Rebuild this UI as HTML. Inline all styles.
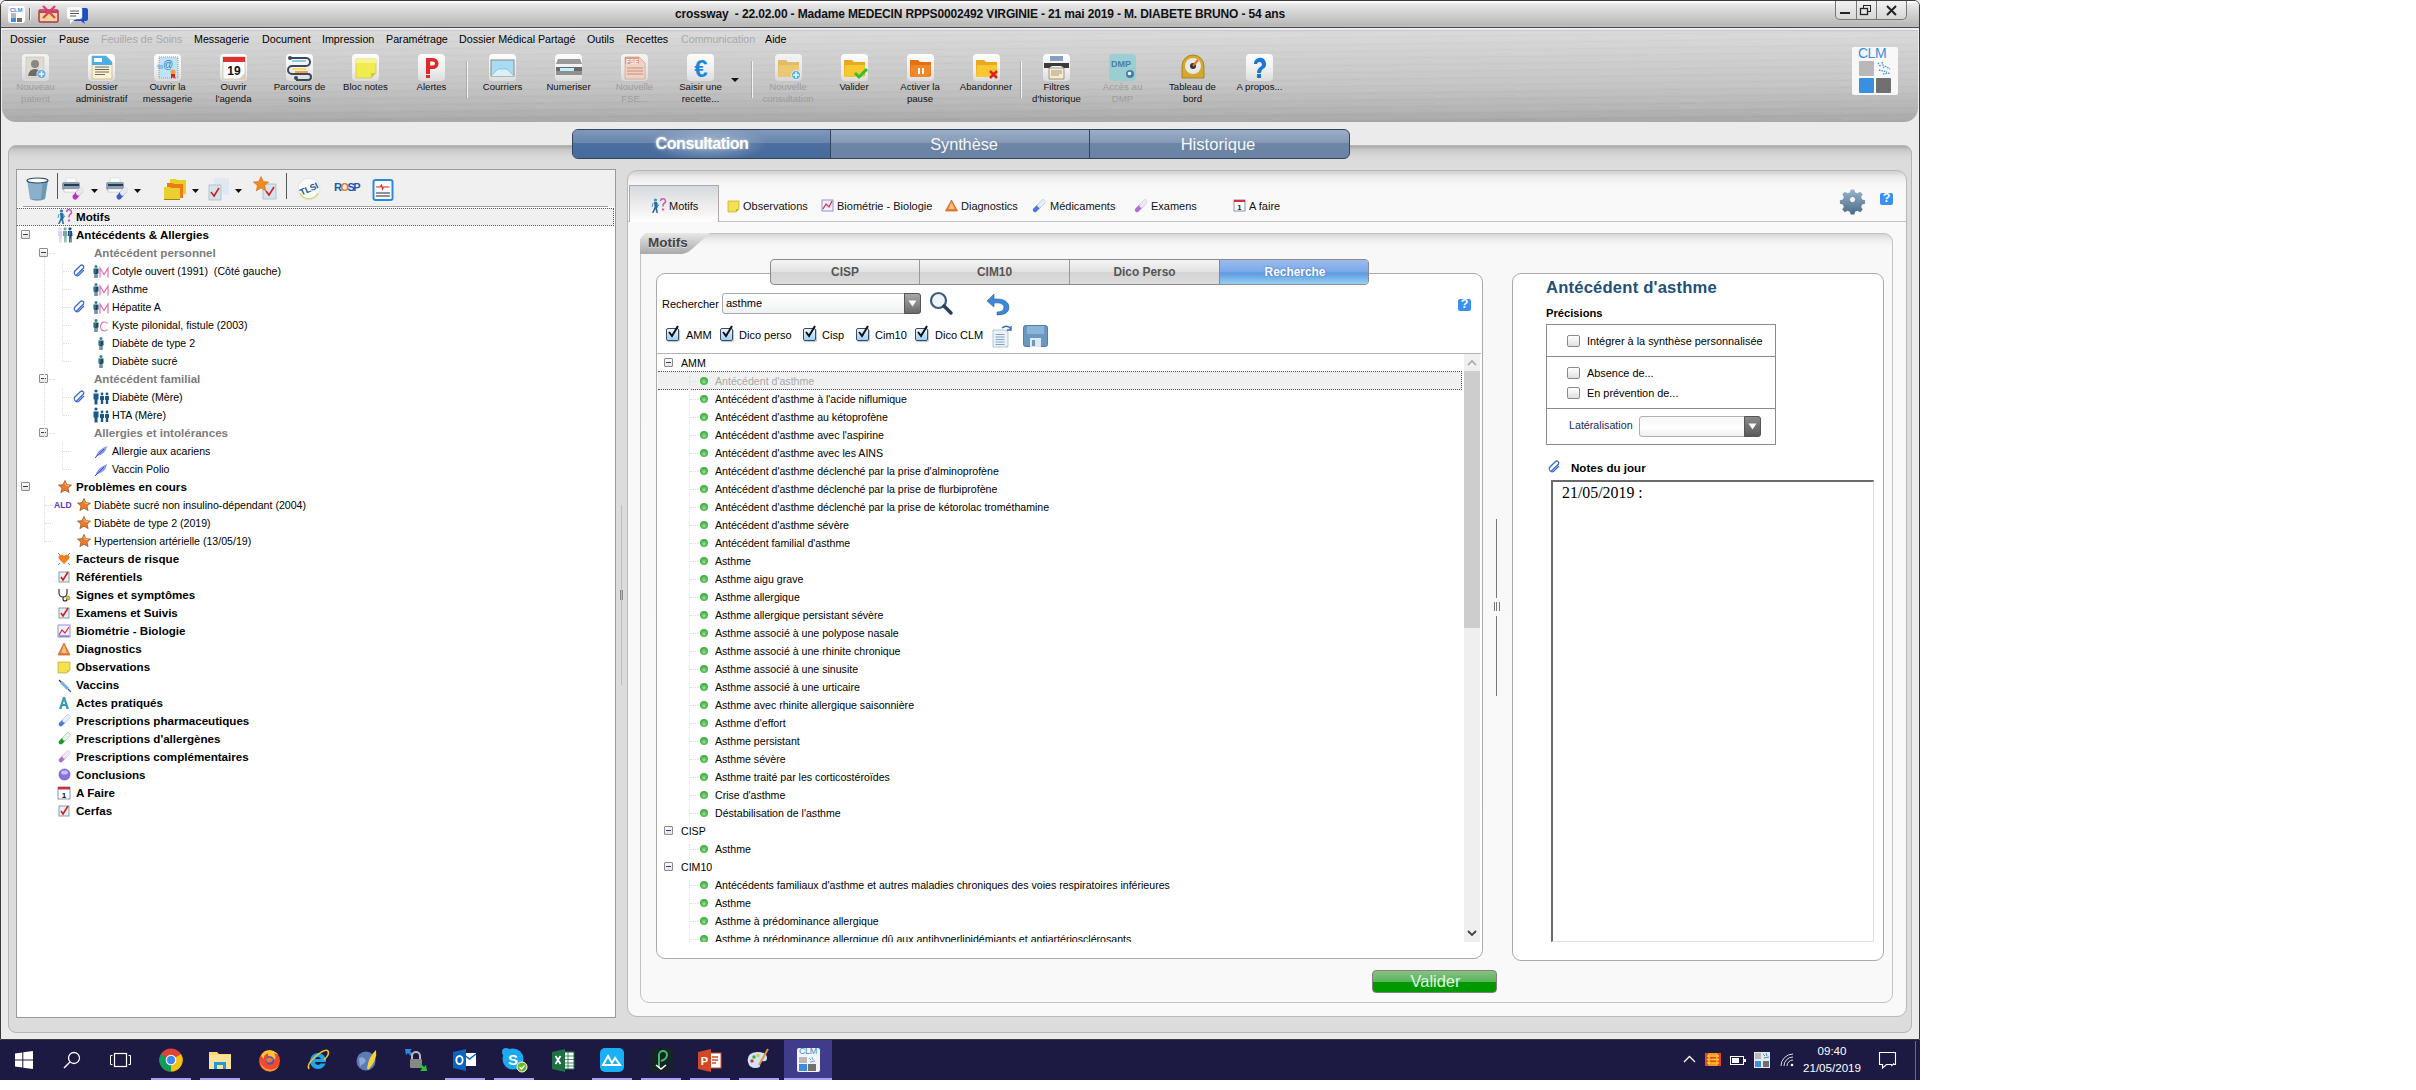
<!DOCTYPE html>
<html><head><meta charset="utf-8">
<style>
*{box-sizing:border-box;margin:0;padding:0}
html,body{width:2416px;height:1090px;background:#fff;overflow:hidden;font-family:"Liberation Sans",sans-serif;}
.a{position:absolute}
svg{position:absolute;overflow:visible}
#scr{position:absolute;left:0;top:0;width:1920px;height:1080px;background:#ebebeb;overflow:hidden}
#win{position:absolute;left:0;top:0;width:1920px;height:1040px;border:1px solid #3a3a3a;border-top-left-radius:6px;border-top-right-radius:6px;background:#ebebeb}
#title{position:absolute;left:0px;top:0px;width:1918px;height:27px;background:linear-gradient(#ffffff,#ffffff 1px,#e9e9e9 3px,#d6d6d6 40%,#c6c6c6 70%,#b8b8b8 92%,#bebebe);border-bottom:1px solid #4a4a4a;border-top-left-radius:5px;border-top-right-radius:5px}
#ttext{position:absolute;left:674px;top:6px;font-size:12px;font-weight:bold;color:#111;letter-spacing:-0.15px;white-space:pre}
#metal{position:absolute;left:1px;top:28px;width:1916px;height:93px;border-top:1px solid #f0f0f2;box-shadow:inset 0 1px 0 #c4c4d6;border-bottom-left-radius:14px;border-bottom-right-radius:14px;
 background:
 repeating-linear-gradient(179.3deg,rgba(255,255,255,.06) 0px,rgba(255,255,255,0) 2px,rgba(0,0,0,.02) 3px,rgba(255,255,255,0) 4px,rgba(255,255,255,.04) 6px,rgba(255,255,255,0) 7px),
 linear-gradient(#dadada,#d0d0d0 25%,#c4c4c4 60%,#b4b4b4 85%,#a6a6a6)}
.menu{position:absolute;top:32px;font-size:10.7px;line-height:14px;color:#000;white-space:pre}
.menu.dis{color:#a9a9a9}
.tb{position:absolute;top:81px;width:90px;margin-left:-45px;text-align:center;font-size:9.6px;line-height:11.6px;color:#111;white-space:pre}
.tb.dis{color:#9c9c9c}
.ib{position:absolute;top:54px;width:27px;height:27px;margin-left:-13.5px;border-radius:4px;background:linear-gradient(#fdfdfd,#eeeeee 60%,#dcdcdc)}
.ib.dis{opacity:.8}
.sep{position:absolute;top:61px;width:1px;height:37px;background:#f4f4f4;box-shadow:-1px 0 0 rgba(120,120,120,.35)}
.tb1{position:absolute;font-size:11.6px;font-weight:bold;line-height:18px;color:#000;white-space:pre}
.tb2{position:absolute;font-size:11.6px;font-weight:bold;line-height:18px;color:#7c7c7c;white-space:pre}
.ti{position:absolute;font-size:10.6px;line-height:19px;color:#000;white-space:pre}
.mb{position:absolute;width:9px;height:9px;border:1px solid #8c8c8c;border-radius:1px;background:linear-gradient(#fff,#e4e4e4)}
.tl{position:absolute;top:198px;font-size:11px;line-height:16px;color:#111;white-space:pre}
.lb{position:absolute;font-size:11px;line-height:16px;color:#000;white-space:pre}
.li{position:absolute;font-size:10.6px;line-height:18px;color:#000;white-space:pre}
.bul{position:absolute;width:8px;height:8px;border-radius:50%;background:radial-gradient(circle at 50% 60%,#a8e0a8 0,#5ac05a 35%,#2aa02a 100%)}
.itab{position:absolute;top:0;height:24px;line-height:24px;text-align:center;font-size:11.9px;font-weight:bold;color:#555}
.qh{position:absolute;width:13px;height:12px;border-radius:2px;background:#3a90ef}
.qh:after{content:"?";position:absolute;left:0;top:-2px;width:13px;text-align:center;font-size:12.5px;font-weight:bold;color:#fff}
.cbx{position:absolute;width:13px;height:13px;border:1px solid #3a4a6a;border-radius:2px;background:linear-gradient(#f0f8ff,#9ad0f8);box-shadow:1px 1px 1px rgba(0,0,0,.25)}
.cbe{position:absolute;width:13px;height:12px;border:1px solid #8a8a8a;border-radius:2px;background:linear-gradient(#fff,#e0e0e0)}
.mb:after{content:"";position:absolute;left:1px;top:3px;width:5px;height:1px;background:#2a3a8a}
</style></head><body>
<div id="scr">
<div id="win">
 <div id="title">
  <div id="ttext">crossway  - 22.02.00 - Madame MEDECIN RPPS0002492 VIRGINIE - 21 mai 2019 - M. DIABETE BRUNO - 54 ans</div>
  <!-- title icons -->
  <div class="a" style="left:7px;top:5px;width:17px;height:17px;background:#fff;border-radius:3px"></div>
  <div class="a" style="left:9px;top:6px;font-size:6px;font-weight:bold;color:#3a8fe0;letter-spacing:-0.3px">CLM</div>
  <div class="a" style="left:10px;top:12px;width:5px;height:5px;background:#b8b8b8"></div>
  <div class="a" style="left:10px;top:17px;width:5px;height:4px;background:#3a8fe0"></div>
  <div class="a" style="left:16px;top:17px;width:5px;height:4px;background:#707070"></div>
  <div class="a" style="left:28px;top:7px;width:1px;height:12px;background:#666;box-shadow:1px 0 0 #eee"></div>
  <svg style="left:37px;top:4px" width="21" height="18" viewBox="0 0 21 18">
   <rect x="1" y="5" width="19" height="12" rx="1.5" fill="#f0d890" stroke="#b03060" stroke-width="1.5"/>
   <rect x="1" y="6" width="19" height="2" fill="#c04070"/>
   <path d="M5 1 L17 13 M17 1 L5 13" stroke="#e04060" stroke-width="2.2"/>
  </svg>
  <svg style="left:66px;top:5px" width="22" height="18" viewBox="0 0 22 18">
   <path d="M14 2 h5 a2 2 0 0 1 2 2 v9 a2 2 0 0 1 -2 2 h-2 l1 3 l-4 -3 h-8 l9 -5z" fill="#2050c0"/>
   <rect x="0" y="1" width="15" height="12" rx="2" fill="#fff" stroke="#ddd" stroke-width=".5"/>
   <path d="M3 14 l0 4 l4 -4z" fill="#fff"/>
   <path d="M3 5 h9 M3 7.5 h9 M3 10 h6" stroke="#555" stroke-width="1"/>
  </svg>
  <!-- window buttons -->
  <div class="a" style="left:1834px;top:0px;width:72px;height:19px;border:1px solid #777;border-top:none;border-bottom-left-radius:5px;border-bottom-right-radius:5px;background:linear-gradient(#f2f2f2,#d6d6d6)"></div>
  <div class="a" style="left:1855px;top:0px;width:1px;height:19px;background:#777"></div>
  <div class="a" style="left:1875px;top:0px;width:1px;height:19px;background:#777"></div>
  <div class="a" style="left:1839px;top:11px;width:10px;height:2px;background:#222"></div>
  <svg style="left:1859px;top:4px" width="12" height="11" viewBox="0 0 12 11"><rect x="3.5" y="0.5" width="7" height="6" fill="none" stroke="#222"/><rect x="0.5" y="3.5" width="7" height="6" fill="#e6e6e6" stroke="#222" stroke-width="1.3"/></svg>
  <svg style="left:1885px;top:4px" width="12" height="11" viewBox="0 0 12 11"><path d="M1 1 L10 10 M10 1 L1 10" stroke="#222" stroke-width="2"/></svg>
 </div>
 <div id="metal"></div>
</div>
<!-- menu -->
  <div class="menu" style="left:10px">Dossier</div>
  <div class="menu" style="left:59px">Pause</div>
  <div class="menu dis" style="left:101px">Feuilles de Soins</div>
  <div class="menu" style="left:194px">Messagerie</div>
  <div class="menu" style="left:262px">Document</div>
  <div class="menu" style="left:322px">Impression</div>
  <div class="menu" style="left:386px">Paramétrage</div>
  <div class="menu" style="left:459px">Dossier Médical Partagé</div>
  <div class="menu" style="left:587px">Outils</div>
  <div class="menu" style="left:626px">Recettes</div>
  <div class="menu dis" style="left:681px">Communication</div>
  <div class="menu" style="left:765px">Aide</div>
<!-- toolbar -->
<div class="ib dis" style="left:35.5px"><svg style="left:3px;top:2px" width="22" height="24" viewBox="0 0 22 24"><rect x="1" y="1" width="18" height="21" fill="#e6dfcf" stroke="#bbb" stroke-width=".6"/><circle cx="10" cy="8" r="4" fill="#777"/><path d="M3 20 q1-7 7-7 q6 0 7 7z" fill="#555"/><circle cx="16.5" cy="18" r="4.6" fill="#4aa8e8" stroke="#fff" stroke-width=".8"/><path d="M16.5 15.2v5.6M13.7 18h5.6" stroke="#fff" stroke-width="1.6"/></svg></div>
<div class="tb dis" style="left:35.5px">Nouveau
patient</div>
<div class="ib" style="left:101.5px"><svg style="left:3px;top:1px" width="22" height="25" viewBox="0 0 22 25"><path d="M1 1h14l6 6v17h-20z" fill="#fbf1cf" stroke="#c9b98a" stroke-width=".8"/><path d="M1 1h14l6 6v3h-20z" fill="#4aaee8"/><rect x="3" y="3" width="8" height="4" fill="#fff"/><path d="M4 12h14M4 14.5h14M4 17h14M4 19.5h10" stroke="#6a6a6a" stroke-width="1"/></svg></div>
<div class="tb" style="left:101.5px">Dossier
administratif</div>
<div class="ib" style="left:167.5px"><svg style="left:3px;top:2px" width="22" height="24" viewBox="0 0 22 24"><rect x="2" y="1" width="19" height="21" fill="#bfe2f5" stroke="#999" stroke-dasharray="1 1"/><text x="11" y="12" font-size="10" font-family="Liberation Sans" fill="#2a7abf" text-anchor="middle">@</text><path d="M0 10h6M1 12h5" stroke="#5aa0d0" stroke-width="1"/><circle cx="16" cy="16" r="2.5" fill="#f0a030"/><path d="M14 18l0 5 2-2 2 2 0-5z" fill="#e02020"/></svg></div>
<div class="tb" style="left:167.5px">Ouvrir la
messagerie</div>
<div class="ib" style="left:233.5px"><svg style="left:2px;top:1px" width="24" height="25" viewBox="0 0 24 25"><rect x="1" y="2" width="22" height="22" fill="#fff" stroke="#c9c0a0" stroke-width=".8"/><rect x="1" y="2" width="22" height="5" fill="#e03030"/><path d="M17 24 l6 -6 v6z" fill="#d8ceb0"/><text x="12" y="20" font-size="12" font-weight="bold" font-family="Liberation Sans" fill="#111" text-anchor="middle">19</text></svg></div>
<div class="tb" style="left:233.5px">Ouvrir
l'agenda</div>
<div class="ib" style="left:299.5px"><svg style="left:1px;top:1px" width="25" height="25" viewBox="0 0 25 25"><path d="M3 3h16a4 4 0 0 1 0 8h-14a4 4 0 0 0 0 8h16a3 3 0 0 1 0 6h-12" fill="none" stroke="#3a4a5a" stroke-width="2"/><circle cx="3" cy="3" r="2" fill="#3a4a5a"/><circle cx="9" cy="23" r="2" fill="#3a4a5a"/><path d="M5 6h14M5 14h14M8 17h13" stroke="#8cc8f0" stroke-width="2"/><path d="M5 14h14" stroke="#f0e070" stroke-width="2"/><path d="M8 17h13" stroke="#f0a040" stroke-width="2"/></svg></div>
<div class="tb" style="left:299.5px">Parcours de
soins</div>
<div class="ib" style="left:365.5px"><svg style="left:3px;top:4px" width="22" height="20" viewBox="0 0 22 20"><path d="M1 1h20v14l-5 5h-15z" fill="#f0ec50" stroke="#c8c040" stroke-width=".6"/><path d="M16 20l5-5h-5z" fill="#c8d030"/><rect x="1" y="1" width="20" height="4" fill="#f8f490"/></svg></div>
<div class="tb" style="left:365.5px">Bloc notes</div>
<div class="ib" style="left:431.5px"><svg style="left:6px;top:3px" width="16" height="22" viewBox="0 0 16 22"><path d="M2 1h7a5.5 5.5 0 0 1 0 11h-3v5h-4z M6 4.5v4h3a2 2 0 0 0 0-4z" fill="#e02a2a" fill-rule="evenodd"/><rect x="2" y="18" width="4" height="3" fill="#e02a2a"/></svg></div>
<div class="tb" style="left:431.5px">Alertes</div>
<div class="sep" style="left:467px"></div>
<div class="ib" style="left:502.5px"><svg style="left:1px;top:4px" width="25" height="20" viewBox="0 0 25 20"><rect x="1" y="2" width="23" height="16" fill="#a8dcf5" stroke="#8a8a7a" stroke-width="1"/><path d="M1 18 l7 -7 h9 l7 7" fill="#d8f0fb" stroke="#7aa8c0" stroke-width=".6"/></svg></div>
<div class="tb" style="left:502.5px">Courriers</div>
<div class="ib" style="left:568.5px"><svg style="left:1px;top:3px" width="26" height="22" viewBox="0 0 26 22"><path d="M2 2h22l2 5h-26z" fill="#9a9a9a"/><rect x="0" y="10" width="26" height="8" fill="#6a6a6a"/><rect x="4" y="11" width="14" height="3" fill="#bff0ff"/><rect x="0" y="14" width="26" height="4" fill="#909090"/></svg></div>
<div class="tb" style="left:568.5px">Numeriser</div>
<div class="ib dis" style="left:634.5px"><svg style="left:3px;top:2px" width="22" height="24" viewBox="0 0 22 24"><path d="M1 1h14l6 6v16h-20z" fill="#f6d6c6" stroke="#d8a080" stroke-width=".8"/><rect x="1" y="1" width="14" height="7" fill="#e09070"/><text x="2" y="7.5" font-size="6.5" font-weight="bold" font-family="Liberation Sans" fill="#fff">FSE</text><path d="M3 12h16M3 15h16M3 18h16" stroke="#e09a80" stroke-width="1.4"/></svg></div>
<div class="tb dis" style="left:634.5px">Nouvelle
FSE...</div>
<div class="ib" style="left:700.5px"><svg style="left:2px;top:3px" width="24" height="22" viewBox="0 0 24 22"><text x="12" y="20" font-size="24" font-weight="bold" font-family="Liberation Sans" fill="#1a88d8" text-anchor="middle">€</text></svg></div>
<div class="tb" style="left:700.5px">Saisir une
recette...</div>
<svg style="left:731px;top:78px" width="8" height="5" viewBox="0 0 8 5"><path d="M0 0h8l-4 4z" fill="#111"/></svg>
<div class="sep" style="left:752px"></div>
<div class="ib dis" style="left:788px"><svg style="left:2px;top:3px" width="24" height="23" viewBox="0 0 24 23"><path d="M1 3h8l2 2h11v14h-21z" fill="#e8b850"/><path d="M2 8h20l-1 12h-20z" fill="#f5c860"/><circle cx="19" cy="18" r="4.5" fill="#30b0e8" stroke="#fff" stroke-width=".8"/><path d="M19 15v6M16 18h6" stroke="#fff" stroke-width="1.6"/></svg></div>
<div class="tb dis" style="left:788px">Nouvelle
consultation</div>
<div class="ib" style="left:854px"><svg style="left:2px;top:3px" width="24" height="23" viewBox="0 0 24 23"><path d="M1 3h8l2 2h11v14h-21z" fill="#e8a820"/><path d="M2 8h20l-1 12h-20z" fill="#f8c830"/><path d="M12 16 l4 4 l8 -8" fill="none" stroke="#30c030" stroke-width="3"/></svg></div>
<div class="tb" style="left:854px">Valider</div>
<div class="ib" style="left:920px"><svg style="left:2px;top:3px" width="24" height="23" viewBox="0 0 24 23"><path d="M1 3h8l2 2h11v14h-21z" fill="#e07010"/><path d="M2 8h20l-1 12h-20z" fill="#f08828"/><path d="M10 11v6M14 11v6" stroke="#fff" stroke-width="2"/></svg></div>
<div class="tb" style="left:920px">Activer la
pause</div>
<div class="ib" style="left:986px"><svg style="left:2px;top:3px" width="24" height="23" viewBox="0 0 24 23"><path d="M1 3h8l2 2h11v14h-21z" fill="#e8a820"/><path d="M2 8h20l-1 12h-20z" fill="#f8c830"/><path d="M15 14 l7 7 M22 14 l-7 7" stroke="#e02020" stroke-width="2.5"/></svg></div>
<div class="tb" style="left:986px">Abandonner</div>
<div class="sep" style="left:1021px"></div>
<div class="ib" style="left:1056.5px"><svg style="left:1px;top:2px" width="25" height="24" viewBox="0 0 25 24"><rect x="6" y="0" width="13" height="5" fill="#8aa0c0"/><path d="M0 7h25v5h-5l-3-2h-9l-3 2h-5z" fill="#3a3a3a"/><path d="M5 12h15v11h-15z" fill="#f8ecc0" stroke="#666" stroke-width=".6"/><path d="M7 15h11M7 17h11M7 19h8" stroke="#889" stroke-width=".8"/></svg></div>
<div class="tb" style="left:1056.5px">Filtres
d'historique</div>
<div class="ib dis" style="left:1122.5px;background:#8fd0d4"><svg style="left:1px;top:3px" width="25" height="22" viewBox="0 0 25 22"><text x="1" y="10" font-size="9" font-weight="bold" font-family="Liberation Sans" fill="#2a6aa0">DMP</text><circle cx="20" cy="17" r="4" fill="#2a6aa0"/><circle cx="19.5" cy="16.5" r="1.8" fill="#fff"/></svg></div>
<div class="tb dis" style="left:1122.5px">Accès au
DMP</div>
<svg style="left:1180px;top:53px" width="26" height="27" viewBox="0 0 26 27"><path d="M2 25 v-12 a11 11 0 0 1 22 0 v12z" fill="#d4a830" stroke="#a07a10" stroke-width=".8"/><circle cx="13" cy="13" r="8" fill="#e8e8e8"/><circle cx="13" cy="13" r="3" fill="#333"/><path d="M13 13 l5 -6" stroke="#f07010" stroke-width="2"/></svg>
<div class="tb" style="left:1192.5px">Tableau de
bord</div>
<div class="ib" style="left:1259.5px"><svg style="left:6px;top:3px" width="16" height="22" viewBox="0 0 16 22"><path d="M2 7 a6 6 0 1 1 9 5 q-2 1 -2 4 h-4 q0-4 3-6 a2.5 2.5 0 1 0 -3-3z" fill="#1a78d0"/><rect x="5" y="17" width="4" height="4" fill="#1a78d0"/></svg></div>
<div class="tb" style="left:1259.5px">A propos...</div>
<!-- CLM logo -->
<div class="a" style="left:1852px;top:47px;width:46px;height:48px;background:#f8f8f8;border-radius:2px"></div>
<div class="a" style="left:1858px;top:45px;font-size:14px;color:#3a8fe0;letter-spacing:-0.5px">CLM</div>
<div class="a" style="left:1859px;top:61px;width:15px;height:15px;background:#b8b8b8;border-radius:1px"></div>
<div class="a" style="left:1859px;top:78px;width:15px;height:15px;background:#3a8fe0;border-radius:1px"></div>
<div class="a" style="left:1876px;top:78px;width:15px;height:15px;background:#707070;border-radius:1px"></div>
<svg style="left:1876px;top:61px" width="16" height="15" viewBox="0 0 16 15"><path d="M2 2 l3 4 M6 1 l2 6 M3 9 l8 2 M9 5 l5 3 M7 13 l7 -1" stroke="#3a8fe0" stroke-width="1.3" stroke-dasharray="1.5 1"/></svg>
<!-- big panel -->
<div class="a" style="left:8px;top:145px;width:1904px;height:888px;border:1px solid #b4b4b4;border-radius:8px;background:linear-gradient(#a9a9a9,#c8c8c8 4px,#d8d8d8 10px,#dcdcdc 16px)"></div>
<!-- main tabs -->
<div class="a" style="left:572px;top:129px;width:778px;height:30px;border:1px solid #34445c;border-radius:6px;overflow:hidden;background:linear-gradient(#9caec6,#8599b6 45%,#6e86a6 46%,#6a82a3)">
 <div class="a" style="left:0;top:0;width:258px;height:28px;background:linear-gradient(#7f97b9,#6b87ae 45%,#4b6fa0 46%,#466a9b);border-right:1px solid #34445c"></div>
 <div class="a" style="left:70px;top:-6px;width:130px;height:40px;background:radial-gradient(ellipse at center,rgba(200,215,230,.55),rgba(200,215,230,0) 65%)"></div>
 <div class="a" style="left:516px;top:0;width:1px;height:28px;background:#34445c"></div>
 <div class="a" style="left:0;top:5px;width:258px;text-align:center;font-size:16px;font-weight:bold;color:#fff;letter-spacing:-0.4px;text-shadow:0 0 3px rgba(255,255,255,.6)">Consultation</div>
 <div class="a" style="left:262px;top:5px;width:258px;text-align:center;font-size:16.4px;color:#f4f6fa;letter-spacing:-0.1px">Synthèse</div>
 <div class="a" style="left:515px;top:5px;width:260px;text-align:center;font-size:16.6px;color:#f4f6fa;letter-spacing:0px">Historique</div>
</div>
<!-- left inner box -->
<div class="a" style="left:16px;top:169px;width:600px;height:849px;border:1px solid #9a9a9a;background:#fff"></div>
<div class="a" style="left:17px;top:170px;width:598px;height:37px;background:#f0f0f0"></div>
<div class="a" style="left:23px;top:206px;width:585px;height:1px;background:#a0a0a0"></div>
<!-- splitter grips -->
<div class="a" style="left:620px;top:590px;width:1px;height:10px;background:#888;box-shadow:2px 0 0 #888"></div>
<div class="a" style="left:621px;top:505px;width:1px;height:180px;background:#bdbdbd"></div>
<!-- right panel -->
<div class="a" style="left:627px;top:170px;width:1280px;height:847px;border:1px solid #b9b9b9;border-radius:10px;background:linear-gradient(#cfcfcf,#ececec 6px,#f7f7f7 14px,#f9f9f9 20px)"></div>
<div class="a" style="left:628px;top:221px;width:1278px;height:1px;background:#c4c4c4"></div>
<!-- tabs row -->
<div class="a" style="left:629px;top:185px;width:90px;height:37px;border:1px solid #b0a8a8;border-bottom:none;background:linear-gradient(#d3dae0,#e8e8e8 40%,#f6f2f2 70%,#fff)"></div>
<!-- motifs frame -->
<div class="a" style="left:640px;top:233px;width:1253px;height:770px;border:1px solid #c2c2c2;border-radius:9px;background:linear-gradient(#d6d6d6,#eeeeee 6px,#f8f8f8 12px,#f9f9f9)"></div>
<svg style="left:640px;top:233px" width="70" height="21" viewBox="0 0 70 21"><path d="M0 9 a9 9 0 0 1 9 -9 h61 l-18 16 q-4 4 -10 5 h-42z" fill="url(#mg)"/><defs><linearGradient id="mg" x1="0" y1="0" x2="0" y2="1"><stop offset="0" stop-color="#e8e8e8"/><stop offset=".5" stop-color="#c8c8c8"/><stop offset="1" stop-color="#a8a8a8"/></linearGradient></defs></svg>
<div class="a" style="left:648px;top:235px;font-size:13.5px;font-weight:bold;color:#444;text-shadow:0 1px 0 rgba(255,255,255,.5)">Motifs</div>

<svg style="left:26px;top:177px" width="23" height="25" viewBox="0 0 23 25"><path d="M1 3 L4 22 q7 3 15 0 L22 3z" fill="#8ab0cc"/><path d="M4 22 q7 3 15 0 L22 3 L17 3 L15 22z" fill="#5a86a8" opacity=".6"/><ellipse cx="11.5" cy="3.5" rx="10.5" ry="2.5" fill="#fff" stroke="#2a4a60" stroke-width="1.2"/></svg>
<div class="a" style="left:57px;top:173px;width:1px;height:26px;background:#555"></div>
<svg style="left:62px;top:177px" width="25" height="24" viewBox="0 0 25 24"><rect x="4" y="1" width="10" height="5" fill="#fff" stroke="#ccc" stroke-width=".5"/><rect x="0" y="5" width="18" height="8" rx="2" fill="#8aa0b4"/><rect x="2" y="7" width="15" height="2" fill="#2a3a4a"/><rect x="2" y="12" width="15" height="3" fill="#fff" stroke="#999" stroke-width=".4"/><path d="M13 20 l6-7" stroke="#c030c0" stroke-width="5" stroke-linecap="round"/><path d="M16.5 16 l3-3.5" stroke="#e8e8ec" stroke-width="5" stroke-linecap="round"/></svg>
<svg style="left:91px;top:189px" width="8" height="5" viewBox="0 0 8 5"><path d="M0 0h7l-3.5 4z" fill="#111"/></svg>
<svg style="left:106px;top:177px" width="25" height="24" viewBox="0 0 25 24"><rect x="4" y="1" width="10" height="5" fill="#fff" stroke="#ccc" stroke-width=".5"/><rect x="0" y="5" width="18" height="8" rx="2" fill="#8aa0b4"/><rect x="2" y="7" width="15" height="2" fill="#2a3a4a"/><rect x="2" y="12" width="15" height="3" fill="#fff" stroke="#999" stroke-width=".4"/><path d="M13 20 l6-7" stroke="#3a60d0" stroke-width="5" stroke-linecap="round"/><path d="M16.5 16 l3-3.5" stroke="#e8e8ec" stroke-width="5" stroke-linecap="round"/></svg>
<svg style="left:134px;top:189px" width="8" height="5" viewBox="0 0 8 5"><path d="M0 0h7l-3.5 4z" fill="#111"/></svg>
<svg style="left:164px;top:176px" width="24" height="25" viewBox="0 0 24 25"><path d="M6 3h6l1 1h9v14h-16z" fill="#e8d020"/><path d="M3 7h6l1 1h9v14h-16z" fill="#f07818"/><path d="M0 11h6l1 1h9v12h-16z" fill="#e8d030"/><path d="M0 24h16v-1h-16z" fill="#a08010"/></svg>
<svg style="left:192px;top:189px" width="8" height="5" viewBox="0 0 8 5"><path d="M0 0h7l-3.5 4z" fill="#111"/></svg>
<svg style="left:209px;top:177px" width="23" height="24" viewBox="0 0 23 24"><rect x="5" y="1" width="15" height="17" rx="1" fill="#e0e8f0"/><rect x="0" y="8" width="12" height="15" fill="#d4e4ea" stroke="#9ab" stroke-width=".6"/><path d="M2 15l3 4 5-8" fill="none" stroke="#d02020" stroke-width="1.6"/></svg>
<svg style="left:235px;top:189px" width="8" height="5" viewBox="0 0 8 5"><path d="M0 0h7l-3.5 4z" fill="#111"/></svg>
<svg style="left:253px;top:176px" width="26" height="25" viewBox="0 0 26 25"><rect x="10" y="8" width="13" height="15" fill="#d4e4ea" stroke="#9ab" stroke-width=".6"/><path d="M13 15l3 4 5-8" fill="none" stroke="#d02020" stroke-width="1.6"/><path d="M8 .5l2.3 5 5.4.5-4.1 3.6 1.2 5.3L8 12.1 3.2 14.9 4.4 9.6.3 6l5.4-.5z" fill="#f08a20" stroke="#c06010" stroke-width=".5"/></svg>
<div class="a" style="left:286px;top:173px;width:1px;height:26px;background:#555"></div>
<svg style="left:297px;top:177px" width="25" height="25" viewBox="0 0 25 25"><circle cx="12" cy="12" r="11" fill="#fafafa" stroke="#ccc" stroke-width=".5"/><path d="M3 16 a10 10 0 0 0 18 0" fill="none" stroke="#d0d870" stroke-width="1.5"/><text x="12" y="15" font-size="9" font-weight="bold" font-family="Liberation Sans" fill="#1a5aa0" text-anchor="middle" transform="rotate(-25 12 12)">TLSI</text></svg>
<div class="a" style="left:334px;top:181px;font-size:11px;font-weight:bold;color:#1a5ab0;letter-spacing:-1.5px">R<span style="color:#e07a20">O</span>SP</div>
<svg style="left:372px;top:178px" width="23" height="24" viewBox="0 0 23 24"><rect x="1.5" y="2" width="19" height="20" rx="2" fill="#fff" stroke="#2a8ae0" stroke-width="2"/><path d="M4 9h4l1.5-2 1 4 1-2h6" fill="none" stroke="#e02020" stroke-width="1.2"/><path d="M4 15h14M4 18h14" stroke="#222" stroke-width="1"/><path d="M5 1v2M9 1v2M13 1v2M17 1v2" stroke="#2a8ae0" stroke-width="1.5"/></svg>

<div class="a" style="left:17px;top:208px;width:597px;height:18px;background:#f0f0f0;border:1px dotted #4a4af0;border-left:none"></div>
<svg style="left:57px;top:209px" width="16" height="16" viewBox="0 0 16 16"><circle cx="4.5" cy="2" r="1.6" fill="#2a7ac0"/><path d="M3 4h3l1 5 -1 1 1 5h-1.5l-1-4-2 4h-1.5l2.5-6z" fill="#2a6aa0"/><path d="M2 5l-1 4M6 5l2 3" stroke="#3a9ad0" stroke-width="1"/><path d="M9.5 3a2.5 2.5 0 1 1 3.5 2.5q-1 .6-1 2v1" fill="none" stroke="#c060b0" stroke-width="1.5"/><rect x="11" y="10.5" width="2" height="2" fill="#c060b0" transform="rotate(45 12 11.5)"/></svg>
<div class="tb1" style="left:76px;top:208px">Motifs</div>
<div class="mb" style="left:21px;top:230px"></div>
<svg style="left:57px;top:227px" width="16" height="16" viewBox="0 0 16 16"><g fill="#d4d4f4"><circle cx="3" cy="1.8" r="1.6"/><path d="M1 4h4l.6 5h-1v6.5h-1v-4h-.4v4h-1v-6.5h-1.2z"/></g><g fill="#7aa8a0"><circle cx="8" cy="1.8" r="1.6"/><path d="M6 4h4l.6 5h-1v6.5h-1v-4h-.4v4h-1v-6.5h-1.2z"/></g><g fill="#1a4a80"><circle cx="13" cy="1.8" r="1.6"/><path d="M11 4h4l.6 5h-1v6.5h-1v-4h-.4v4h-1v-6.5h-1.2z"/></g><path d="M12.2 4.5h1v4h-1z" fill="#4a8ae0"/></svg>
<div class="tb1" style="left:76px;top:226px">Antécédents &amp; Allergies</div>
<div class="mb" style="left:39px;top:248px"></div>
<div class="tb2" style="left:94px;top:244px">Antécédent personnel</div>
<svg style="left:73px;top:265px" width="13" height="12" viewBox="0 0 13 12"><path d="M3 10.5 L10.5 3 a2 2 0 0 0 -3 -2.5 L1.5 6.5 a3 3 0 0 0 4 4 L11 5" fill="none" stroke="#3a6ad0" stroke-width="1.3"/></svg>
<svg style="left:93px;top:265px" width="6" height="13" viewBox="0 0 6 13"><circle cx="3" cy="1.6" r="1.5" fill="#2a8a8a"/><path d="M0.5 3.5h5v5h-1v4.5h-1.1v-4h-0.8v4h-1.1v-4.5h-1z" fill="#1a4a6a"/><path d="M1.5 4h1v4h-1z" fill="#3a9a9a"/></svg>
<svg style="left:99px;top:267px" width="10" height="11" viewBox="0 0 10 11"><path d="M1 10.5V1l4 6.5L9 1v9.5" fill="none" stroke="#e070b0" stroke-width="1.2"/></svg>
<div class="ti" style="left:112px;top:262px">Cotyle ouvert (1991)  (Côté gauche)</div>
<svg style="left:93px;top:283px" width="6" height="13" viewBox="0 0 6 13"><circle cx="3" cy="1.6" r="1.5" fill="#2a8a8a"/><path d="M0.5 3.5h5v5h-1v4.5h-1.1v-4h-0.8v4h-1.1v-4.5h-1z" fill="#1a4a6a"/><path d="M1.5 4h1v4h-1z" fill="#3a9a9a"/></svg>
<svg style="left:99px;top:285px" width="10" height="11" viewBox="0 0 10 11"><path d="M1 10.5V1l4 6.5L9 1v9.5" fill="none" stroke="#e070b0" stroke-width="1.2"/></svg>
<div class="ti" style="left:112px;top:280px">Asthme</div>
<svg style="left:73px;top:301px" width="13" height="12" viewBox="0 0 13 12"><path d="M3 10.5 L10.5 3 a2 2 0 0 0 -3 -2.5 L1.5 6.5 a3 3 0 0 0 4 4 L11 5" fill="none" stroke="#3a6ad0" stroke-width="1.3"/></svg>
<svg style="left:93px;top:301px" width="6" height="13" viewBox="0 0 6 13"><circle cx="3" cy="1.6" r="1.5" fill="#2a8a8a"/><path d="M0.5 3.5h5v5h-1v4.5h-1.1v-4h-0.8v4h-1.1v-4.5h-1z" fill="#1a4a6a"/><path d="M1.5 4h1v4h-1z" fill="#3a9a9a"/></svg>
<svg style="left:99px;top:303px" width="10" height="11" viewBox="0 0 10 11"><path d="M1 10.5V1l4 6.5L9 1v9.5" fill="none" stroke="#e070b0" stroke-width="1.2"/></svg>
<div class="ti" style="left:112px;top:298px">Hépatite A</div>
<svg style="left:93px;top:319px" width="6" height="13" viewBox="0 0 6 13"><circle cx="3" cy="1.6" r="1.5" fill="#2a8a8a"/><path d="M0.5 3.5h5v5h-1v4.5h-1.1v-4h-0.8v4h-1.1v-4.5h-1z" fill="#1a4a6a"/><path d="M1.5 4h1v4h-1z" fill="#3a9a9a"/></svg>
<svg style="left:99px;top:321px" width="10" height="11" viewBox="0 0 10 11"><path d="M8.5 2.5a4 4.5 0 1 0 0 6" fill="none" stroke="#e070b0" stroke-width="1.2"/></svg>
<div class="ti" style="left:112px;top:316px">Kyste pilonidal, fistule (2003)</div>
<svg style="left:98px;top:337px" width="6" height="13" viewBox="0 0 6 13"><circle cx="3" cy="1.6" r="1.5" fill="#2a8a8a"/><path d="M0.5 3.5h5v5h-1v4.5h-1.1v-4h-0.8v4h-1.1v-4.5h-1z" fill="#1a4a6a"/><path d="M1.5 4h1v4h-1z" fill="#3a9a9a"/></svg>
<div class="ti" style="left:112px;top:334px">Diabète de type 2</div>
<svg style="left:98px;top:355px" width="6" height="13" viewBox="0 0 6 13"><circle cx="3" cy="1.6" r="1.5" fill="#2a8a8a"/><path d="M0.5 3.5h5v5h-1v4.5h-1.1v-4h-0.8v4h-1.1v-4.5h-1z" fill="#1a4a6a"/><path d="M1.5 4h1v4h-1z" fill="#3a9a9a"/></svg>
<div class="ti" style="left:112px;top:352px">Diabète sucré</div>
<div class="mb" style="left:39px;top:374px"></div>
<div class="tb2" style="left:94px;top:370px">Antécédent familial</div>
<svg style="left:73px;top:391px" width="13" height="12" viewBox="0 0 13 12"><path d="M3 10.5 L10.5 3 a2 2 0 0 0 -3 -2.5 L1.5 6.5 a3 3 0 0 0 4 4 L11 5" fill="none" stroke="#3a6ad0" stroke-width="1.3"/></svg>
<svg style="left:93px;top:389px" width="17" height="16" viewBox="0 0 17 16"><g fill="#1a5a8a"><circle cx="3" cy="2" r="1.6"/><path d="M0.5 4.5h5v6h-1v5h-3v-5h-1z"/><circle cx="9" cy="5" r="1.4"/><path d="M7 7h4v4h-.8v4h-2.4v-4h-.8z"/><circle cx="14" cy="5" r="1.4"/><path d="M12 7h4v4h-.8v4h-2.4v-4h-.8z"/></g></svg>
<div class="ti" style="left:112px;top:388px">Diabète (Mère)</div>
<svg style="left:93px;top:407px" width="17" height="16" viewBox="0 0 17 16"><g fill="#1a5a8a"><circle cx="3" cy="2" r="1.6"/><path d="M0.5 4.5h5v6h-1v5h-3v-5h-1z"/><circle cx="9" cy="5" r="1.4"/><path d="M7 7h4v4h-.8v4h-2.4v-4h-.8z"/><circle cx="14" cy="5" r="1.4"/><path d="M12 7h4v4h-.8v4h-2.4v-4h-.8z"/></g></svg>
<div class="ti" style="left:112px;top:406px">HTA (Mère)</div>
<div class="mb" style="left:39px;top:428px"></div>
<div class="tb2" style="left:94px;top:424px">Allergies et intolérances</div>
<svg style="left:94px;top:445px" width="14" height="14" viewBox="0 0 14 14"><path d="M1 13 Q4 4 13 1 Q12 9 3 11z" fill="#8a9af0"/><path d="M1 13 L10 4" stroke="#4a50c0" stroke-width="1"/></svg>
<div class="ti" style="left:112px;top:442px">Allergie aux acariens</div>
<svg style="left:94px;top:463px" width="14" height="14" viewBox="0 0 14 14"><path d="M1 13 Q4 4 13 1 Q12 9 3 11z" fill="#8a9af0"/><path d="M1 13 L10 4" stroke="#4a50c0" stroke-width="1"/></svg>
<div class="ti" style="left:112px;top:460px">Vaccin Polio</div>
<div class="mb" style="left:21px;top:482px"></div>
<svg style="left:58px;top:480px" width="14" height="14" viewBox="0 0 14 14"><path d="M7 .5l1.9 4.2 4.6.4-3.5 3 1.1 4.5L7 10.2 2.9 12.6 4 8.1 .5 5.1l4.6-.4z" fill="#f07a28" stroke="#8a4a20" stroke-width=".7"/><path d="M7 2.5l1.2 2.8 3 .3" fill="none" stroke="#fad070" stroke-width=".8"/></svg>
<div class="tb1" style="left:76px;top:478px">Problèmes en cours</div>
<div class="a" style="left:54px;top:496px;font-size:8.5px;line-height:18px;color:#5a3ac0;letter-spacing:.1px;font-weight:bold">ALD</div>
<svg style="left:77px;top:498px" width="14" height="14" viewBox="0 0 14 14"><path d="M7 .5l1.9 4.2 4.6.4-3.5 3 1.1 4.5L7 10.2 2.9 12.6 4 8.1 .5 5.1l4.6-.4z" fill="#f07a28" stroke="#8a4a20" stroke-width=".7"/><path d="M7 2.5l1.2 2.8 3 .3" fill="none" stroke="#fad070" stroke-width=".8"/></svg>
<div class="ti" style="left:94px;top:496px">Diabète sucré non insulino-dépendant (2004)</div>
<svg style="left:77px;top:516px" width="14" height="14" viewBox="0 0 14 14"><path d="M7 .5l1.9 4.2 4.6.4-3.5 3 1.1 4.5L7 10.2 2.9 12.6 4 8.1 .5 5.1l4.6-.4z" fill="#f07a28" stroke="#8a4a20" stroke-width=".7"/><path d="M7 2.5l1.2 2.8 3 .3" fill="none" stroke="#fad070" stroke-width=".8"/></svg>
<div class="ti" style="left:94px;top:514px">Diabète de type 2 (2019)</div>
<svg style="left:77px;top:534px" width="14" height="14" viewBox="0 0 14 14"><path d="M7 .5l1.9 4.2 4.6.4-3.5 3 1.1 4.5L7 10.2 2.9 12.6 4 8.1 .5 5.1l4.6-.4z" fill="#f07a28" stroke="#8a4a20" stroke-width=".7"/><path d="M7 2.5l1.2 2.8 3 .3" fill="none" stroke="#fad070" stroke-width=".8"/></svg>
<div class="ti" style="left:94px;top:532px">Hypertension artérielle (13/05/19)</div>
<svg style="left:57px;top:552px" width="14" height="14" viewBox="0 0 14 14"><path d="M7 12 L2 7 a2.5 2.5 0 0 1 5-3 a2.5 2.5 0 0 1 5 3z" fill="#f08020"/><path d="M1 1l2 2M13 1l-2 2M1 13l2-2M13 13l-2-2" stroke="#3a8ae0" stroke-width="1"/></svg>
<div class="tb1" style="left:76px;top:550px">Facteurs de risque</div>
<svg style="left:58px;top:570px" width="13" height="13" viewBox="0 0 13 13"><rect x="1" y="2" width="10" height="10" fill="#e8f0f4" stroke="#6a8a9a" stroke-width=".8"/><path d="M3 7l2 3 5-8" fill="none" stroke="#d02020" stroke-width="1.6"/></svg>
<div class="tb1" style="left:76px;top:568px">Référentiels</div>
<svg style="left:57px;top:588px" width="14" height="14" viewBox="0 0 14 14"><path d="M2 1v4a4 4 0 0 0 8 0v-4M6 9v2a2 2 0 0 0 4 0v-1" fill="none" stroke="#222" stroke-width="1.1"/><circle cx="11" cy="10" r="2" fill="#f0c020" stroke="#555" stroke-width=".5"/></svg>
<div class="tb1" style="left:76px;top:586px">Signes et symptômes</div>
<svg style="left:58px;top:606px" width="13" height="13" viewBox="0 0 13 13"><rect x="1" y="2" width="10" height="10" fill="#e8f0f4" stroke="#6a8a9a" stroke-width=".8"/><path d="M3 7l2 3 5-8" fill="none" stroke="#d02020" stroke-width="1.6"/></svg>
<div class="tb1" style="left:76px;top:604px">Examens et Suivis</div>
<svg style="left:57px;top:624px" width="14" height="14" viewBox="0 0 14 14"><rect x="1" y="1" width="12" height="12" fill="#f4f0fa" stroke="#7a7ac0" stroke-width=".8"/><path d="M2 11l3-5 3 3 4-6" fill="none" stroke="#d03050" stroke-width="1.2"/><path d="M2 12h10" stroke="#5050c0"/></svg>
<div class="tb1" style="left:76px;top:622px">Biométrie - Biologie</div>
<svg style="left:57px;top:642px" width="14" height="14" viewBox="0 0 14 14"><path d="M7 1l6 12h-12z" fill="#f08030" stroke="#a05020" stroke-width=".6"/><path d="M7 3l-3 8h6z" fill="#fac080"/></svg>
<div class="tb1" style="left:76px;top:640px">Diagnostics</div>
<svg style="left:57px;top:660px" width="14" height="14" viewBox="0 0 14 14"><path d="M1 2h12v8l-3 3h-9z" fill="#f4e050" stroke="#b0a020" stroke-width=".6"/><path d="M10 13l3-3h-3z" fill="#d0c040"/></svg>
<div class="tb1" style="left:76px;top:658px">Observations</div>
<svg style="left:57px;top:678px" width="15" height="15" viewBox="0 0 15 15"><path d="M2 2l3 3" stroke="#333" stroke-width="1.2"/><path d="M4 4l7 7" stroke="#7ab0e0" stroke-width="3"/><path d="M11 11l3 3" stroke="#2a6ab0" stroke-width="1.2"/></svg>
<div class="tb1" style="left:76px;top:676px">Vaccins</div>
<svg style="left:57px;top:696px" width="14" height="14" viewBox="0 0 14 14"><path d="M2 13L6 1h2l4 12h-2.5l-1-3h-3l-1 3z M6 8h2l-1-3.5z" fill="#3a9ab0" fill-rule="evenodd"/></svg>
<div class="tb1" style="left:76px;top:694px">Actes pratiqués</div>
<svg style="left:58px;top:714px" width="13" height="13" viewBox="0 0 14 14"><path d="M3 11l8-8" stroke="#4a7ae0" stroke-width="4.6" stroke-linecap="round"/><path d="M7 7l4-4" stroke="#e8eef8" stroke-width="4.6" stroke-linecap="round"/></svg>
<div class="tb1" style="left:76px;top:712px">Prescriptions pharmaceutiques</div>
<svg style="left:58px;top:732px" width="13" height="13" viewBox="0 0 14 14"><path d="M3 11l8-8" stroke="#1a9a2a" stroke-width="4.6" stroke-linecap="round"/><path d="M7 7l4-4" stroke="#e8f0e8" stroke-width="4.6" stroke-linecap="round"/></svg>
<div class="tb1" style="left:76px;top:730px">Prescriptions d'allergènes</div>
<svg style="left:58px;top:750px" width="13" height="13" viewBox="0 0 14 14"><path d="M3 11l8-8" stroke="#b070d0" stroke-width="4.6" stroke-linecap="round"/><path d="M7 7l4-4" stroke="#eee8f4" stroke-width="4.6" stroke-linecap="round"/></svg>
<div class="tb1" style="left:76px;top:748px">Prescriptions complémentaires</div>
<svg style="left:58px;top:768px" width="13" height="13" viewBox="0 0 13 13"><circle cx="6.5" cy="6.5" r="5.5" fill="#8a70e0" stroke="#5a40b0" stroke-width=".6"/><ellipse cx="6.5" cy="4.5" rx="3.5" ry="2" fill="#c8c0f8"/></svg>
<div class="tb1" style="left:76px;top:766px">Conclusions</div>
<svg style="left:57px;top:786px" width="14" height="14" viewBox="0 0 14 14"><rect x="1" y="1" width="12" height="12" fill="#fff" stroke="#6a7a9a" stroke-width=".8"/><rect x="1" y="1" width="12" height="2.5" fill="#d03040"/><text x="7" y="11.5" font-size="8" font-weight="bold" text-anchor="middle" fill="#111" font-family="Liberation Sans">1</text></svg>
<div class="tb1" style="left:76px;top:784px">A Faire</div>
<svg style="left:58px;top:804px" width="13" height="13" viewBox="0 0 13 13"><rect x="1" y="2" width="10" height="10" fill="#e8f0f4" stroke="#6a8a9a" stroke-width=".8"/><path d="M3 7l2 3 5-8" fill="none" stroke="#d02020" stroke-width="1.6"/></svg>
<div class="tb1" style="left:76px;top:802px">Cerfas</div>
<div class="a" style="left:44px;top:257px;width:1px;height:180px;border-left:1px dotted #dedede"></div>
<div class="a" style="left:62px;top:262px;width:1px;height:99px;border-left:1px dotted #dedede"></div>
<div class="a" style="left:62px;top:388px;width:1px;height:27px;border-left:1px dotted #dedede"></div>
<div class="a" style="left:62px;top:442px;width:1px;height:27px;border-left:1px dotted #dedede"></div>
<div class="a" style="left:44px;top:496px;width:1px;height:45px;border-left:1px dotted #dedede"></div>
<div class="a" style="left:63px;top:271px;width:8px;height:1px;border-top:1px dotted #dedede"></div>
<div class="a" style="left:63px;top:289px;width:8px;height:1px;border-top:1px dotted #dedede"></div>
<div class="a" style="left:63px;top:307px;width:8px;height:1px;border-top:1px dotted #dedede"></div>
<div class="a" style="left:63px;top:325px;width:8px;height:1px;border-top:1px dotted #dedede"></div>
<div class="a" style="left:63px;top:343px;width:8px;height:1px;border-top:1px dotted #dedede"></div>
<div class="a" style="left:63px;top:361px;width:8px;height:1px;border-top:1px dotted #dedede"></div>
<div class="a" style="left:63px;top:397px;width:8px;height:1px;border-top:1px dotted #dedede"></div>
<div class="a" style="left:63px;top:415px;width:8px;height:1px;border-top:1px dotted #dedede"></div>
<div class="a" style="left:63px;top:451px;width:8px;height:1px;border-top:1px dotted #dedede"></div>
<div class="a" style="left:63px;top:469px;width:8px;height:1px;border-top:1px dotted #dedede"></div>
<div class="a" style="left:45px;top:505px;width:8px;height:1px;border-top:1px dotted #dedede"></div>
<div class="a" style="left:45px;top:523px;width:8px;height:1px;border-top:1px dotted #dedede"></div>
<div class="a" style="left:45px;top:541px;width:8px;height:1px;border-top:1px dotted #dedede"></div>
<div class="a" style="left:49px;top:253px;width:6px;height:1px;border-top:1px dotted #dedede"></div>
<div class="a" style="left:49px;top:379px;width:6px;height:1px;border-top:1px dotted #dedede"></div>
<div class="a" style="left:49px;top:433px;width:6px;height:1px;border-top:1px dotted #dedede"></div><svg style="left:651px;top:198px" width="16" height="16" viewBox="0 0 16 16"><circle cx="4.5" cy="2" r="1.6" fill="#2a9ad0"/><path d="M3 4h3l1 5 -1 1 1 5h-1.5l-1-4-2 4h-1.5l2.5-6z" fill="#2a6aa0"/><path d="M2 5l-1 4M6 5l2 3" stroke="#3a9ad0" stroke-width="1"/><path d="M9.5 3a2.5 2.5 0 1 1 3.5 2.5q-1 .6-1 2v1" fill="none" stroke="#c060b0" stroke-width="1.5"/><rect x="11" y="10.5" width="2" height="2" fill="#c060b0" transform="rotate(45 12 11.5)"/></svg>
<div class="tl" style="left:669px">Motifs</div>
<svg style="left:727px;top:199px" width="13" height="13" viewBox="0 0 13 13"><path d="M1 2h11v8l-3 3h-8z" fill="#f4e050" stroke="#b0a020" stroke-width=".6"/><path d="M9 13l3-3h-3z" fill="#c8b830"/></svg>
<div class="tl" style="left:743px">Observations</div>
<svg style="left:821px;top:199px" width="13" height="13" viewBox="0 0 13 13"><rect x="1" y="1" width="11" height="11" fill="#f4f0fa" stroke="#7a7ac0" stroke-width=".8"/><path d="M2 10l3-5 3 3 3-6" fill="none" stroke="#d03050" stroke-width="1.2"/></svg>
<div class="tl" style="left:837px">Biométrie - Biologie</div>
<svg style="left:945px;top:199px" width="13" height="13" viewBox="0 0 13 13"><path d="M6.5 1l6 11h-12z" fill="#f08030" stroke="#a05020" stroke-width=".6"/><path d="M6.5 3l-3 7h6z" fill="#fac080"/></svg>
<div class="tl" style="left:961px">Diagnostics</div>
<svg style="left:1033px;top:199px" width="13" height="13" viewBox="0 0 13 13"><path d="M2 11l8-8" stroke="#4a7ae0" stroke-width="4.5" stroke-linecap="round"/><path d="M6.5 6.5l3.5-3.5" stroke="#e8eef8" stroke-width="4.5" stroke-linecap="round"/></svg>
<div class="tl" style="left:1050px">Médicaments</div>
<svg style="left:1135px;top:199px" width="13" height="13" viewBox="0 0 13 13"><path d="M2 11l8-8" stroke="#b070d0" stroke-width="4.5" stroke-linecap="round"/><path d="M6.5 6.5l3.5-3.5" stroke="#eee8f4" stroke-width="4.5" stroke-linecap="round"/></svg>
<div class="tl" style="left:1151px">Examens</div>
<svg style="left:1233px;top:199px" width="13" height="13" viewBox="0 0 13 13"><rect x="1" y="1" width="11" height="11" fill="#fff" stroke="#6a7a9a" stroke-width=".8"/><rect x="1" y="1" width="11" height="2" fill="#d03040"/><text x="6.5" y="10.5" font-size="7" font-weight="bold" text-anchor="middle" fill="#111" font-family="Liberation Sans">1</text></svg>
<div class="tl" style="left:1249px">A faire</div>
<svg style="left:1841px;top:188px" width="23" height="23" viewBox="0 0 25 25"><defs><linearGradient id="gg" x1="0" y1="0" x2="0" y2="1"><stop offset="0" stop-color="#9ab4cc"/><stop offset="1" stop-color="#4a6a88"/></linearGradient></defs><g transform="translate(12.5 12.5)"><path d="M-2 -11h4l.8 3.2 2.6 1.1 2.9-1.7 2.8 2.8-1.7 2.9 1.1 2.6 3.2.8v4l-3.2.8-1.1 2.6 1.7 2.9-2.8 2.8-2.9-1.7-2.6 1.1-.8 3.2h-4l-.8-3.2-2.6-1.1-2.9 1.7-2.8-2.8 1.7-2.9-1.1-2.6-3.2-.8v-4l3.2-.8 1.1-2.6-1.7-2.9 2.8-2.8 2.9 1.7 2.6-1.1z" fill="url(#gg)"/><circle r="3.4" fill="#f4f6f8" stroke="#4a6a88" stroke-width=".8"/></g></svg>
<div class="qh" style="left:1880px;top:193px"></div>
<div class="a" style="left:656px;top:273px;width:827px;height:686px;border:1px solid #aaa;border-radius:9px;background:#fff"></div>
<div class="a" style="left:770px;top:259px;width:599px;height:26px;border:1px solid #8a8a8a;border-radius:4px;overflow:hidden;background:linear-gradient(#f4f4f4,#e2e2e2 50%,#d4d4d4 51%,#dcdcdc)"><div class="a" style="left:148px;top:0;width:1px;height:26px;background:#9a9a9a"></div><div class="a" style="left:298px;top:0;width:1px;height:26px;background:#9a9a9a"></div><div class="a" style="left:448px;top:0;width:150px;height:26px;border-left:1px solid #8a8a8a;background:linear-gradient(#9cbcea,#7aa8ec 45%,#5f98e0 50%,#8cc8f0 85%,#a8e4f8)"></div><div class="itab" style="left:0;width:148px">CISP</div><div class="itab" style="left:149px;width:149px">CIM10</div><div class="itab" style="left:299px;width:149px">Dico Perso</div><div class="itab" style="left:449px;width:150px;color:#fff;text-shadow:0 0 2px rgba(40,80,160,.6)">Recherche</div></div>
<div class="lb" style="left:662px;top:296px">Rechercher</div>
<div class="a" style="left:722px;top:293px;width:199px;height:21px;border:1px solid #a8a8a8;border-radius:3px;background:linear-gradient(#ffffff,#eef2f4)"></div>
<div class="a" style="left:904px;top:293px;width:17px;height:21px;border:1px solid #555;border-radius:0 3px 3px 0;background:linear-gradient(#a8a8a8,#6a6a6a)"></div>
<svg style="left:908px;top:300px" width="9" height="7" viewBox="0 0 9 7"><path d="M0.5 0.5h8l-4 6z" fill="#fff"/></svg>
<div class="lb" style="left:726px;top:295px">asthme</div>
<svg style="left:929px;top:291px" width="25" height="26" viewBox="0 0 25 26"><circle cx="9.5" cy="9.5" r="7.5" fill="#eef4f8" stroke="#3a5a78" stroke-width="2.2"/><path d="M15 15l7 7" stroke="#2a4058" stroke-width="3.5" stroke-linecap="round"/></svg>
<svg style="left:986px;top:292px" width="26" height="24" viewBox="0 0 26 24"><path d="M8 2 L1 9 L8 15 v-4 q9 -1 10 4 q0 5 -7 5 v3 q12 0 12 -8 q-1 -9 -15 -8z" fill="#3a8ad8" stroke="#2a5a98" stroke-width=".6"/></svg>
<div class="qh" style="left:1458px;top:299px"></div>
<div class="cbx" style="left:666px;top:328px"></div>
<svg style="left:667px;top:325px" width="13" height="14" viewBox="0 0 13 14"><path d="M2 7l3 4 6-10" fill="none" stroke="#111" stroke-width="2"/></svg>
<div class="lb" style="left:686px;top:327px">AMM</div>
<div class="cbx" style="left:720px;top:328px"></div>
<svg style="left:721px;top:325px" width="13" height="14" viewBox="0 0 13 14"><path d="M2 7l3 4 6-10" fill="none" stroke="#111" stroke-width="2"/></svg>
<div class="lb" style="left:739px;top:327px">Dico perso</div>
<div class="cbx" style="left:803px;top:328px"></div>
<svg style="left:804px;top:325px" width="13" height="14" viewBox="0 0 13 14"><path d="M2 7l3 4 6-10" fill="none" stroke="#111" stroke-width="2"/></svg>
<div class="lb" style="left:822px;top:327px">Cisp</div>
<div class="cbx" style="left:856px;top:328px"></div>
<svg style="left:857px;top:325px" width="13" height="14" viewBox="0 0 13 14"><path d="M2 7l3 4 6-10" fill="none" stroke="#111" stroke-width="2"/></svg>
<div class="lb" style="left:875px;top:327px">Cim10</div>
<div class="cbx" style="left:915px;top:328px"></div>
<svg style="left:916px;top:325px" width="13" height="14" viewBox="0 0 13 14"><path d="M2 7l3 4 6-10" fill="none" stroke="#111" stroke-width="2"/></svg>
<div class="lb" style="left:935px;top:327px">Dico CLM</div>
<svg style="left:992px;top:324px" width="22" height="24" viewBox="0 0 22 24"><path d="M1 6h13l2 2v15h-15z" fill="#eaf2fa" stroke="#8aa" stroke-width=".6"/><path d="M3.5 10.5h9M3.5 13h9M3.5 15.5h9M3.5 18h9M3.5 20.5h9" stroke="#3a6ab0" stroke-width=".6"/><path d="M10 4 q5 -4 9 1" fill="none" stroke="#2a6ab8" stroke-width="1.5"/><path d="M19 2v4h-4" fill="none" stroke="#2a6ab8" stroke-width="1.3"/></svg>
<svg style="left:1023px;top:325px" width="25" height="22" viewBox="0 0 25 22"><rect x="0.5" y="0.5" width="24" height="21" rx="2" fill="#6a98c0" stroke="#3a6890" stroke-width=".8"/><rect x="4" y="1" width="17" height="8" fill="#8ab4d8"/><rect x="7" y="13" width="11" height="9" fill="#dfe8f0"/><rect x="9" y="15" width="3" height="6" fill="#6a98c0"/></svg>
<div class="a" style="left:657px;top:353px;width:824px;height:1px;background:#b4b4b4"></div>
<div class="a" style="left:1464px;top:354px;width:16px;height:588px;background:#efefef"></div>
<div class="a" style="left:1464px;top:371px;width:16px;height:257px;background:#cdcdcd"></div>
<svg style="left:1467px;top:359px" width="10" height="7" viewBox="0 0 10 7"><path d="M1 6l4-4 4 4" fill="none" stroke="#a8a8a8" stroke-width="1.6"/></svg>
<svg style="left:1467px;top:930px" width="10" height="7" viewBox="0 0 10 7"><path d="M1 1l4 4 4-4" fill="none" stroke="#444" stroke-width="1.8"/></svg>
<div class="a" style="left:658px;top:371px;width:804px;height:19px;background:#f0f0f0;border:1px dotted #3a3af0;border-left:none"></div>
<div class="a" style="left:657px;top:354px;width:806px;height:588px;overflow:hidden"><div class="mb" style="left:7px;top:4px"></div><div class="li" style="left:24px;top:0px">AMM</div><div class="bul" style="left:43px;top:23px"></div><div class="li" style="left:58px;top:18px;color:#a8a8a8">Antécédent d'asthme</div><div class="bul" style="left:43px;top:41px"></div><div class="li" style="left:58px;top:36px">Antécédent d'asthme à l'acide niflumique</div><div class="bul" style="left:43px;top:59px"></div><div class="li" style="left:58px;top:54px">Antécédent d'asthme au kétoprofène</div><div class="bul" style="left:43px;top:77px"></div><div class="li" style="left:58px;top:72px">Antécédent d'asthme avec l'aspirine</div><div class="bul" style="left:43px;top:95px"></div><div class="li" style="left:58px;top:90px">Antécédent d'asthme avec les AINS</div><div class="bul" style="left:43px;top:113px"></div><div class="li" style="left:58px;top:108px">Antécédent d'asthme déclenché par la prise d'alminoprofène</div><div class="bul" style="left:43px;top:131px"></div><div class="li" style="left:58px;top:126px">Antécédent d'asthme déclenché par la prise de flurbiprofène</div><div class="bul" style="left:43px;top:149px"></div><div class="li" style="left:58px;top:144px">Antécédent d'asthme déclenché par la prise de kétorolac trométhamine</div><div class="bul" style="left:43px;top:167px"></div><div class="li" style="left:58px;top:162px">Antécédent d'asthme sévère</div><div class="bul" style="left:43px;top:185px"></div><div class="li" style="left:58px;top:180px">Antécédent familial d'asthme</div><div class="bul" style="left:43px;top:203px"></div><div class="li" style="left:58px;top:198px">Asthme</div><div class="bul" style="left:43px;top:221px"></div><div class="li" style="left:58px;top:216px">Asthme aigu grave</div><div class="bul" style="left:43px;top:239px"></div><div class="li" style="left:58px;top:234px">Asthme allergique</div><div class="bul" style="left:43px;top:257px"></div><div class="li" style="left:58px;top:252px">Asthme allergique persistant sévère</div><div class="bul" style="left:43px;top:275px"></div><div class="li" style="left:58px;top:270px">Asthme associé à une polypose nasale</div><div class="bul" style="left:43px;top:293px"></div><div class="li" style="left:58px;top:288px">Asthme associé à une rhinite chronique</div><div class="bul" style="left:43px;top:311px"></div><div class="li" style="left:58px;top:306px">Asthme associé à une sinusite</div><div class="bul" style="left:43px;top:329px"></div><div class="li" style="left:58px;top:324px">Asthme associé à une urticaire</div><div class="bul" style="left:43px;top:347px"></div><div class="li" style="left:58px;top:342px">Asthme avec rhinite allergique saisonnière</div><div class="bul" style="left:43px;top:365px"></div><div class="li" style="left:58px;top:360px">Asthme d'effort</div><div class="bul" style="left:43px;top:383px"></div><div class="li" style="left:58px;top:378px">Asthme persistant</div><div class="bul" style="left:43px;top:401px"></div><div class="li" style="left:58px;top:396px">Asthme sévère</div><div class="bul" style="left:43px;top:419px"></div><div class="li" style="left:58px;top:414px">Asthme traité par les corticostéroïdes</div><div class="bul" style="left:43px;top:437px"></div><div class="li" style="left:58px;top:432px">Crise d'asthme</div><div class="bul" style="left:43px;top:455px"></div><div class="li" style="left:58px;top:450px">Déstabilisation de l'asthme</div><div class="mb" style="left:7px;top:472px"></div><div class="li" style="left:24px;top:468px">CISP</div><div class="bul" style="left:43px;top:491px"></div><div class="li" style="left:58px;top:486px">Asthme</div><div class="mb" style="left:7px;top:508px"></div><div class="li" style="left:24px;top:504px">CIM10</div><div class="bul" style="left:43px;top:527px"></div><div class="li" style="left:58px;top:522px">Antécédents familiaux d'asthme et autres maladies chroniques des voies respiratoires inférieures</div><div class="bul" style="left:43px;top:545px"></div><div class="li" style="left:58px;top:540px">Asthme</div><div class="bul" style="left:43px;top:563px"></div><div class="li" style="left:58px;top:558px">Asthme à prédominance allergique</div><div class="bul" style="left:43px;top:581px"></div><div class="li" style="left:58px;top:576px">Asthme à prédominance allergique dû aux antihyperlipidémiants et antiartériosclérosants</div><div class="a" style="left:32px;top:22px;width:1px;height:446px;border-left:1px dotted #e0e0e0"></div><div class="a" style="left:33px;top:27px;width:8px;height:1px;border-top:1px dotted #e0e0e0"></div><div class="a" style="left:33px;top:45px;width:8px;height:1px;border-top:1px dotted #e0e0e0"></div><div class="a" style="left:33px;top:63px;width:8px;height:1px;border-top:1px dotted #e0e0e0"></div><div class="a" style="left:33px;top:81px;width:8px;height:1px;border-top:1px dotted #e0e0e0"></div><div class="a" style="left:33px;top:99px;width:8px;height:1px;border-top:1px dotted #e0e0e0"></div><div class="a" style="left:33px;top:117px;width:8px;height:1px;border-top:1px dotted #e0e0e0"></div><div class="a" style="left:33px;top:135px;width:8px;height:1px;border-top:1px dotted #e0e0e0"></div><div class="a" style="left:33px;top:153px;width:8px;height:1px;border-top:1px dotted #e0e0e0"></div><div class="a" style="left:33px;top:171px;width:8px;height:1px;border-top:1px dotted #e0e0e0"></div><div class="a" style="left:33px;top:189px;width:8px;height:1px;border-top:1px dotted #e0e0e0"></div><div class="a" style="left:33px;top:207px;width:8px;height:1px;border-top:1px dotted #e0e0e0"></div><div class="a" style="left:33px;top:225px;width:8px;height:1px;border-top:1px dotted #e0e0e0"></div><div class="a" style="left:33px;top:243px;width:8px;height:1px;border-top:1px dotted #e0e0e0"></div><div class="a" style="left:33px;top:261px;width:8px;height:1px;border-top:1px dotted #e0e0e0"></div><div class="a" style="left:33px;top:279px;width:8px;height:1px;border-top:1px dotted #e0e0e0"></div><div class="a" style="left:33px;top:297px;width:8px;height:1px;border-top:1px dotted #e0e0e0"></div><div class="a" style="left:33px;top:315px;width:8px;height:1px;border-top:1px dotted #e0e0e0"></div><div class="a" style="left:33px;top:333px;width:8px;height:1px;border-top:1px dotted #e0e0e0"></div><div class="a" style="left:33px;top:351px;width:8px;height:1px;border-top:1px dotted #e0e0e0"></div><div class="a" style="left:33px;top:369px;width:8px;height:1px;border-top:1px dotted #e0e0e0"></div><div class="a" style="left:33px;top:387px;width:8px;height:1px;border-top:1px dotted #e0e0e0"></div><div class="a" style="left:33px;top:405px;width:8px;height:1px;border-top:1px dotted #e0e0e0"></div><div class="a" style="left:33px;top:423px;width:8px;height:1px;border-top:1px dotted #e0e0e0"></div><div class="a" style="left:33px;top:441px;width:8px;height:1px;border-top:1px dotted #e0e0e0"></div><div class="a" style="left:33px;top:459px;width:8px;height:1px;border-top:1px dotted #e0e0e0"></div><div class="a" style="left:32px;top:490px;width:1px;height:14px;border-left:1px dotted #e0e0e0"></div><div class="a" style="left:33px;top:495px;width:8px;height:1px;border-top:1px dotted #e0e0e0"></div><div class="a" style="left:32px;top:526px;width:1px;height:68px;border-left:1px dotted #e0e0e0"></div><div class="a" style="left:33px;top:531px;width:8px;height:1px;border-top:1px dotted #e0e0e0"></div><div class="a" style="left:33px;top:549px;width:8px;height:1px;border-top:1px dotted #e0e0e0"></div><div class="a" style="left:33px;top:567px;width:8px;height:1px;border-top:1px dotted #e0e0e0"></div><div class="a" style="left:33px;top:585px;width:8px;height:1px;border-top:1px dotted #e0e0e0"></div></div>
<div class="a" style="left:1496px;top:519px;width:1px;height:79px;background:#777"></div>
<div class="a" style="left:1494px;top:602px;width:1px;height:9px;background:#777;box-shadow:2px 0 0 #777,5px 0 0 #777"></div>
<div class="a" style="left:1496px;top:616px;width:1px;height:80px;background:#777"></div>
<div class="a" style="left:1512px;top:273px;width:372px;height:688px;border:1px solid #aaa;border-radius:9px;background:#fff"></div>
<div class="a" style="left:1546px;top:278px;font-size:16.6px;font-weight:bold;color:#22507a;letter-spacing:.2px">Antécédent d'asthme</div>
<div class="a" style="left:1546px;top:307px;font-size:11.2px;font-weight:bold;color:#000">Précisions</div>
<div class="a" style="left:1546px;top:324px;width:230px;height:121px;border:1px solid #8a8a8a;background:#fff"></div>
<div class="a" style="left:1547px;top:356px;width:228px;height:1px;background:#8a8a8a"></div>
<div class="a" style="left:1547px;top:408px;width:228px;height:1px;background:#8a8a8a"></div>
<div class="cbe" style="left:1567px;top:335px"></div>
<div class="lb" style="left:1587px;top:333px;font-size:10.9px">Intégrer à la synthèse personnalisée</div>
<div class="cbe" style="left:1567px;top:367px"></div>
<div class="lb" style="left:1587px;top:365px;font-size:10.9px">Absence de...</div>
<div class="cbe" style="left:1567px;top:387px"></div>
<div class="lb" style="left:1587px;top:385px;font-size:10.9px">En prévention de...</div>
<div class="lb" style="left:1569px;top:417px;font-size:10.7px;color:#1a2a58">Latéralisation</div>
<div class="a" style="left:1639px;top:416px;width:122px;height:21px;border:1px solid #b0b0b0;border-radius:3px;background:linear-gradient(#f6f6f6,#fff 60%,#eee)"></div>
<div class="a" style="left:1744px;top:416px;width:17px;height:21px;border:1px solid #555;border-radius:0 3px 3px 0;background:linear-gradient(#8a8a8a,#5a5a5a)"></div>
<svg style="left:1748px;top:423px" width="9" height="7" viewBox="0 0 9 7"><path d="M0.5 0.5h8l-4 6z" fill="#fff"/></svg>
<svg style="left:1548px;top:461px" width="13" height="12" viewBox="0 0 13 12"><path d="M3 10.5 L10.5 3 a2 2 0 0 0 -3 -2.5 L1.5 6.5 a3 3 0 0 0 4 4 L11 5" fill="none" stroke="#3a6ad0" stroke-width="1.3"/></svg>
<div class="a" style="left:1571px;top:461px;font-size:11.6px;font-weight:bold;color:#000">Notes du jour</div>
<div class="a" style="left:1551px;top:480px;width:323px;height:462px;border:1px solid #e0e0e0;border-left:2px solid #6a6a6a;border-top:2px solid #6a6a6a;background:#fff"></div>
<div class="a" style="left:1562px;top:484px;font-family:'Liberation Serif',serif;font-size:15.9px;color:#000">21/05/2019 :</div>
<div class="a" style="left:1372px;top:970px;width:125px;height:23px;border:1px solid #8a7a86;border-radius:4px;background:linear-gradient(#84c484,#5ab45a 50%,#009a00 52%,#009a00)"></div>
<div class="a" style="left:1373px;top:972px;width:125px;text-align:center;font-size:16.4px;color:#e4f6e4">Valider</div><div class="a" style="left:0;top:1040px;width:1920px;height:40px;background:#1c1a42"></div>
<!-- start -->
<svg style="left:15px;top:1051px" width="18" height="18" viewBox="0 0 18 18"><path d="M0 2.5l7.3-1v7h-7.3z M8.3 1.3l9.7-1.3v8.5h-9.7z M0 9.5h7.3v7l-7.3-1z M8.3 9.5h9.7v8.5l-9.7-1.3z" fill="#fff"/></svg>
<svg style="left:63px;top:1051px" width="18" height="18" viewBox="0 0 18 18"><circle cx="11" cy="7" r="5.5" fill="none" stroke="#fff" stroke-width="1.3"/><path d="M7 11l-6 6" stroke="#fff" stroke-width="1.4"/></svg>
<svg style="left:110px;top:1052px" width="21" height="16" viewBox="0 0 21 16"><rect x="4.5" y="1.5" width="12" height="13" fill="none" stroke="#fff" stroke-width="1.2"/><path d="M2.5 3.5h-2v9h2M18.5 3.5h2v9h-2" fill="none" stroke="#fff" stroke-width="1"/></svg>
<!-- chrome -->
<svg style="left:159px;top:1048px" width="24" height="24" viewBox="0 0 24 24"><circle cx="12" cy="12" r="11.5" fill="#db4437"/><path d="M12 12 L2 6 A11.5 11.5 0 0 0 12 23.5z" fill="#0f9d58"/><path d="M12 12 L22 6 A11.5 11.5 0 0 1 12 23.5z" fill="#f4c20d"/><circle cx="12" cy="12" r="5.3" fill="#fff"/><circle cx="12" cy="12" r="4.2" fill="#4285f4"/></svg>
<div class="a" style="left:151px;top:1078px;width:40px;height:2px;background:#a9a2f4"></div>
<!-- explorer -->
<svg style="left:209px;top:1050px" width="22" height="20" viewBox="0 0 22 20"><path d="M0 2h8l2 2h12v15h-22z" fill="#f8d775"/><rect x="0" y="5" width="22" height="14" fill="#fbe39a"/><path d="M5 19v-7h12v7h-3v-4h-6v4z" fill="#1e9bdc"/></svg>
<div class="a" style="left:200px;top:1078px;width:40px;height:2px;background:#a9a2f4"></div>
<!-- firefox -->
<svg style="left:258px;top:1048px" width="23" height="24" viewBox="0 0 23 24"><circle cx="11.5" cy="13" r="10.5" fill="#f24a2a"/><path d="M3 8 q2 -6 9 -6 q8 1 10 9 q-1 -5 -6 -6 q3 4 0 7 q-3 2 -6 0 q4 1 4 -2 q-5 -2 -4 -5 q-5 2 -4 6z" fill="#ffc43a"/><circle cx="12" cy="12.5" r="4.2" fill="#4a56c8"/><path d="M8 11 q3 -3 7 0 q-1 5 -6 3z" fill="#f07a2a"/><path d="M2 14 q1 8 9.5 9.5 q7 0 10 -7 q-4 6 -10 5 q-7 -1 -9.5 -7.5z" fill="#f8a030"/></svg>
<!-- ie -->
<svg style="left:307px;top:1048px" width="22" height="24" viewBox="0 0 22 24"><path d="M11 5 a8 8 0 1 0 7.6 10.5h-5 a3.2 3.2 0 0 1 -5.8 -1.5h11.2 a8 8 0 0 0 -8 -9z M8 11 a3.2 3.2 0 0 1 6 0z" fill="#1ea7e6" fill-rule="evenodd"/><path d="M2 21 q-3 -4 6 -12 q10 -9 13 -6 q2 3 -4 9" fill="none" stroke="#f6c02a" stroke-width="1.6"/></svg>
<!-- globe -->
<svg style="left:356px;top:1048px" width="22" height="24" viewBox="0 0 22 24"><circle cx="10" cy="13" r="9.5" fill="#5a7ab8"/><path d="M3 10 q4 -2 6 1 q2 3 -2 5 q-3 1 -3 4" fill="#8fa8d8"/><path d="M12 22 q10 -10 8 -20 q-7 6 -9 18z" fill="#f4d43a"/></svg>
<!-- vpn -->
<svg style="left:404px;top:1048px" width="24" height="24" viewBox="0 0 24 24"><path d="M1 1h7l-2 2 3 3-2 2-3-3-2 2z" fill="#2a8ae8"/><path d="M8 11v-3a4 4 0 0 1 8 0v3" fill="none" stroke="#bbb" stroke-width="2"/><rect x="6" y="11" width="12" height="9" rx="1" fill="#888"/><path d="M23 23h-7l2-2-3-3 2-2 3 3 2-2z" fill="#2ac030"/></svg>
<!-- outlook -->
<svg style="left:453px;top:1049px" width="24" height="22" viewBox="0 0 24 22"><path d="M10 4h13v13h-13z" fill="#fff"/><path d="M10 5l6.5 5 6.5-5" fill="none" stroke="#0a64c0" stroke-width="1.5"/><path d="M0 3l13-3v22l-13-3z" fill="#0a64c0"/><ellipse cx="6.5" cy="11" rx="3.2" ry="4" fill="none" stroke="#fff" stroke-width="1.8"/></svg>
<div class="a" style="left:445px;top:1078px;width:40px;height:2px;background:#a9a2f4"></div>
<!-- skype -->
<svg style="left:502px;top:1048px" width="26" height="25" viewBox="0 0 26 25"><circle cx="11" cy="11" r="10.5" fill="#1eaaf0"/><circle cx="4" cy="4" r="4" fill="#1eaaf0"/><circle cx="18" cy="18" r="4" fill="#1eaaf0"/><text x="11" y="16.5" font-size="15" font-weight="bold" text-anchor="middle" fill="#fff" font-family="Liberation Sans">S</text><circle cx="20" cy="19" r="5" fill="#6ab820" stroke="#fff" stroke-width="1"/><path d="M17.5 19l2 2 3-3.5" fill="none" stroke="#fff" stroke-width="1.2"/></svg>
<div class="a" style="left:494px;top:1078px;width:40px;height:2px;background:#a9a2f4"></div>
<!-- excel -->
<svg style="left:552px;top:1049px" width="23" height="23" viewBox="0 0 23 23"><rect x="11" y="3" width="11" height="17" fill="#fff" stroke="#1d7044" stroke-width="1"/><path d="M11 7h11M11 10.5h11M11 14h11M11 17h11M16 3v17" stroke="#1d7044" stroke-width=".8"/><path d="M0 3l13-3v23l-13-3z" fill="#1d7044"/><path d="M3.5 7l5 8M8.5 7l-5 8" stroke="#fff" stroke-width="1.8"/></svg>
<!-- blue app -->
<svg style="left:600px;top:1048px" width="24" height="24" viewBox="0 0 24 24"><rect x="0" y="0" width="24" height="24" rx="5" fill="#1ab0f8"/><path d="M3 17l5-9 4 7 3-5 5 7z" fill="none" stroke="#fff" stroke-width="2"/></svg>
<div class="a" style="left:592px;top:1078px;width:40px;height:2px;background:#a9a2f4"></div>
<!-- S app -->
<svg style="left:649px;top:1048px" width="24" height="24" viewBox="0 0 24 24"><rect x="0" y="0" width="24" height="24" rx="3" fill="#18222a"/><path d="M10 20 v-13 a4 4 0 0 1 8 0 q0 4 -6 6" fill="none" stroke="#3ac060" stroke-width="2"/><path d="M7 17l5 4 5-4" fill="none" stroke="#fff" stroke-width="1.5"/></svg>
<div class="a" style="left:641px;top:1078px;width:40px;height:2px;background:#a9a2f4"></div>
<!-- ppt -->
<svg style="left:698px;top:1049px" width="24" height="23" viewBox="0 0 24 23"><rect x="10" y="4" width="13" height="15" fill="#fff" stroke="#d24726" stroke-width="1"/><path d="M14 8h6M14 11h6M14 14h4" stroke="#d24726" stroke-width="1.3"/><path d="M0 3l13-3v23l-13-3z" fill="#d24726"/><text x="6.5" y="15.5" font-size="11" font-weight="bold" text-anchor="middle" fill="#fff" font-family="Liberation Sans">P</text></svg>
<div class="a" style="left:690px;top:1078px;width:40px;height:2px;background:#a9a2f4"></div>
<!-- paint -->
<svg style="left:746px;top:1048px" width="25" height="24" viewBox="0 0 25 24"><path d="M2 14 q-2 -9 9 -10 q10 0 10 6 q0 4 -5 3 q-3 0 -2 3 q1 4 -4 4 q-7 0 -8 -6z" fill="#cfe4f4"/><circle cx="6" cy="13" r="1.7" fill="#e03030"/><circle cx="8" cy="9" r="1.7" fill="#30b030"/><circle cx="12" cy="7.5" r="1.7" fill="#f0c020"/><path d="M22 1l-9 16" stroke="#d89a40" stroke-width="2"/></svg>
<div class="a" style="left:739px;top:1078px;width:40px;height:2px;background:#a9a2f4"></div>
<!-- clm active -->
<div class="a" style="left:784px;top:1040px;width:48px;height:40px;background:#3f3c8c"></div>
<div class="a" style="left:784px;top:1078px;width:48px;height:2px;background:#a9a2f4"></div>
<div class="a" style="left:797px;top:1048px;width:23px;height:24px;background:#f4f4f4;border-radius:2px"></div>
<div class="a" style="left:799px;top:1046px;font-size:9px;color:#3a8fe0;letter-spacing:-0.4px">CLM</div>
<div class="a" style="left:799px;top:1057px;width:8px;height:6px;background:#b8b8b8"></div>
<div class="a" style="left:799px;top:1064px;width:8px;height:7px;background:#3a8fe0"></div>
<div class="a" style="left:808px;top:1064px;width:8px;height:7px;background:#707070"></div>
<svg style="left:808px;top:1057px" width="9" height="6" viewBox="0 0 9 6"><path d="M1 1l2 2M4 0l1 3M2 5l5-1" stroke="#3a8fe0" stroke-width=".8"/></svg>
<!-- tray -->
<svg style="left:1683px;top:1055px" width="13" height="8" viewBox="0 0 13 8"><path d="M1 7l5.5-5.5 5.5 5.5" fill="none" stroke="#fff" stroke-width="1.3"/></svg>
<svg style="left:1705px;top:1053px" width="16" height="13" viewBox="0 0 16 13"><rect x="0" y="0" width="16" height="13" fill="#e8481c"/><path d="M2 3h12M2 6.5h12M2 10h12" stroke="#f8d030" stroke-width="1.6"/><rect x="4" y="1" width="8" height="11" fill="none" stroke="#f8d030" stroke-width="1.2"/></svg>
<svg style="left:1730px;top:1056px" width="16" height="9" viewBox="0 0 16 9"><rect x=".5" y=".5" width="13" height="8" fill="none" stroke="#fff"/><rect x="2" y="2" width="7" height="5" fill="#fff"/><rect x="14" y="3" width="2" height="3" fill="#fff"/></svg>
<svg style="left:1754px;top:1052px" width="16" height="16" viewBox="0 0 16 16"><rect x="0" y="0" width="16" height="16" fill="#e8e8e8"/><rect x="1" y="1" width="6" height="6" fill="#b8b8b8"/><rect x="1" y="9" width="6" height="6" fill="#3a8fe0"/><rect x="9" y="9" width="6" height="6" fill="#707070"/><path d="M9 2l2 2M12 1l1 3M10 6l5-1" stroke="#3a8fe0" stroke-width="1"/></svg>
<svg style="left:1780px;top:1053px" width="14" height="14" viewBox="0 0 14 14"><path d="M1 13 a12 12 0 0 1 12 -12 M4 13 a9 9 0 0 1 9 -9 M7 13 a6 6 0 0 1 6 -6" fill="none" stroke="#ddd" stroke-width="1"/><circle cx="12" cy="12" r="1.3" fill="#fff"/></svg>
<div class="a" style="left:1790px;top:1043px;width:84px;text-align:center;font-size:11.6px;line-height:16px;color:#fff">09:40</div>
<div class="a" style="left:1790px;top:1060px;width:84px;text-align:center;font-size:11.6px;line-height:16px;color:#fff">21/05/2019</div>
<svg style="left:1879px;top:1052px" width="18" height="17" viewBox="0 0 18 17"><path d="M.5 .5h16v12h-9l-4 3.5v-3.5h-3z" fill="none" stroke="#fff" stroke-width="1.1"/><path d="M12 14q2 0 3-3" stroke="#fff" stroke-width="1"/></svg>
<div class="a" style="left:1915px;top:1041px;width:1px;height:39px;background:#6a6890"></div>
</div>
</body></html>
